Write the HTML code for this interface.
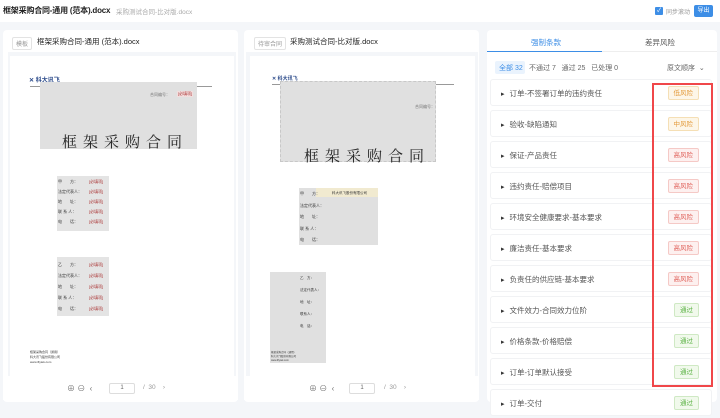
<!DOCTYPE html>
<html><head><meta charset="utf-8"><style>
*{margin:0;padding:0;box-sizing:border-box}
body{width:720px;height:402px;overflow:hidden;background:#f4f6f9;font-family:"Liberation Sans","Noto Sans CJK SC",sans-serif;position:relative;color:#333}
.a{position:absolute}
.cj{font-family:"Noto Serif CJK SC",serif}
.tag{font-size:6px;color:#999;border:1px solid #e3e3e3;border-radius:2px;padding:1px 3px}
.row{position:absolute;left:490px;width:222px;height:27px;background:#fff;border:1px solid #f1f2f4;border-radius:3px;font-size:7.5px;color:#555;line-height:27px;padding-left:10px}
.row:before{content:"▸";font-size:7px;color:#333;margin-right:5px}
.bd{position:absolute;right:12px;top:6px;height:14px;line-height:13px;font-size:6.5px;padding:0 5px;border-radius:2px;border:1px solid}
.hi{color:#e0625b;background:#fdf0ef;border-color:#f5c9c6}
.md{color:#e39a3a;background:#fdf6e8;border-color:#f5dfb5}
.ok{color:#5cb345;background:#f1f9ec;border-color:#cfe9c4}
.ft{font-size:4px;color:#333;line-height:10px}
.fv{font-size:4px;color:#a33;background:#f2dede;padding:0 1px}
</style></head><body>
<div class="a" style="left:0;top:0;width:720px;height:22px;background:#fff"></div>
<div class="a" style="left:3px;top:5px;font-size:8px;font-weight:bold;color:#222;letter-spacing:-0.2px">框架采购合同-通用 (范本).docx</div>
<div class="a" style="left:116px;top:6px;font-size:6.5px;color:#aaa">采购测试合同-比对版.docx</div>
<div class="a" style="left:655px;top:7px;width:8px;height:8px;background:#3d8ee6;border-radius:1px;color:#fff;font-size:6px;line-height:8px;text-align:center">✓</div>
<div class="a" style="left:666px;top:7px;font-size:6px;color:#999">同步滚动</div>
<div class="a" style="left:694px;top:5px;width:19px;height:12px;background:#3d8ee6;border-radius:2px;color:#fff;font-size:6px;line-height:12px;text-align:center">导出</div>

<!-- left panel -->
<div class="a" style="left:3px;top:30px;width:235px;height:372px;background:#fff;border-radius:4px"></div>
<div class="a tag" style="left:12px;top:37px">模板</div>
<div class="a" style="left:37px;top:36px;font-size:7.5px;color:#222">框架采购合同-通用 (范本).docx</div>
<div class="a" style="left:8px;top:52px;width:228px;height:324px;background:#f4f6f9"></div>
<div class="a" style="left:10px;top:56px;width:224px;height:320px;background:#fff"></div>
<div class="a" style="left:29px;top:75px;font-size:6px;color:#2b4a8a;font-weight:bold">✕ 科大讯飞</div>
<div class="a" style="left:30px;top:86px;width:182px;height:1px;background:#999"></div>
<div class="a" style="left:40px;top:82px;width:157px;height:67px;background:#e0e0e0"></div>
<div class="a" style="left:150px;top:92px;font-size:4px;color:#777">合同编号：</div>
<div class="a fv" style="left:177px;top:91px">[必填项]</div>
<div class="a cj" style="left:62px;top:131px;font-size:15px;letter-spacing:6px;color:#222">框架采购合同</div>
<div class="a" style="left:57px;top:176px;width:52px;height:55px;background:#e4e4e4"></div>
<div class="a ft" style="left:58px;top:177px">甲　　方：<br>法定代表人：<br>地　　址：<br>联 系 人：<br>电　　话：</div>
<div class="a ft" style="left:89px;top:177px;color:#a33">[必填项]<br>[必填项]<br>[必填项]<br>[必填项]<br>[必填项]</div>
<div class="a" style="left:57px;top:257px;width:52px;height:59px;background:#e4e4e4"></div>
<div class="a ft" style="left:58px;top:259px;line-height:11px">乙　　方：<br>法定代表人：<br>地　　址：<br>联 系 人：<br>电　　话：</div>
<div class="a ft" style="left:89px;top:259px;color:#a33;line-height:11px">[必填项]<br>[必填项]<br>[必填项]<br>[必填项]<br>[必填项]</div>
<div class="a" style="left:30px;top:350px;font-size:3px;line-height:5px;color:#333">框架采购合同（通用）<br>科大讯飞股份有限公司<br>www.iflytek.com</div>
<div class="a" style="left:3px;top:378px;width:235px;height:22px;background:#fff"></div>
<div class="a" style="left:67px;top:383px;font-size:8px;color:#777">⊕ ⊖ &nbsp;‹</div>
<div class="a" style="left:109px;top:383px;width:26px;height:11px;border:1px solid #ddd;border-radius:2px;font-size:6px;text-align:center;line-height:9px;color:#666">1</div>
<div class="a" style="left:143px;top:384px;font-size:6.5px;color:#999">/ &nbsp;30 &nbsp;&nbsp;&nbsp;›</div>

<!-- middle panel -->
<div class="a" style="left:244px;top:30px;width:235px;height:372px;background:#fff;border-radius:4px"></div>
<div class="a tag" style="left:254px;top:37px">待审合同</div>
<div class="a" style="left:290px;top:36px;font-size:7.5px;color:#222">采购测试合同-比对版.docx</div>
<div class="a" style="left:246px;top:52px;width:232px;height:324px;background:#f4f6f9"></div>
<div class="a" style="left:250px;top:56px;width:225px;height:320px;background:#fff"></div>
<div class="a" style="left:272px;top:75px;font-size:5px;color:#2b4a8a;font-weight:bold">✕ 科大讯飞</div>
<div class="a" style="left:272px;top:84px;width:182px;height:1px;background:#999"></div>
<div class="a" style="left:280px;top:81px;width:156px;height:81px;background:#e0e0e0;border:1px dashed #c8c8c8"></div>
<div class="a" style="left:415px;top:104px;font-size:4px;color:#777">合同编号：</div>
<div class="a cj" style="left:304px;top:145px;font-size:15px;letter-spacing:6px;color:#222">框架采购合同</div>
<div class="a" style="left:299px;top:188px;width:79px;height:57px;background:#e0e0e0"></div>
<div class="a" style="left:316px;top:188px;width:62px;height:9px;background:#f1ead0"></div>
<div class="a ft" style="left:300px;top:188px;line-height:11.5px">甲　　方：<br>法定代表人：<br>地　　址：<br>联 系 人：<br>电　　话：</div>
<div class="a ft" style="left:332px;top:188px;font-size:3.5px">科大讯飞股份有限公司</div>
<div class="a" style="left:270px;top:272px;width:56px;height:91px;background:#e0e0e0"></div>
<div class="a ft" style="left:300px;top:272px;line-height:12px;font-size:3.5px">乙　方：<br>法定代表人：<br>地　址：<br>联系人：<br>电　话：</div>
<div class="a" style="left:271px;top:351px;font-size:2.5px;line-height:4px;color:#333">框架采购合同（通用）<br>科大讯飞股份有限公司<br>www.iflytek.com</div>
<div class="a" style="left:244px;top:378px;width:235px;height:22px;background:#fff"></div>
<div class="a" style="left:309px;top:383px;font-size:8px;color:#777">⊕ ⊖ &nbsp;‹</div>
<div class="a" style="left:349px;top:383px;width:26px;height:11px;border:1px solid #ddd;border-radius:2px;font-size:6px;text-align:center;line-height:9px;color:#666">1</div>
<div class="a" style="left:384px;top:384px;font-size:6.5px;color:#999">/ &nbsp;30 &nbsp;&nbsp;&nbsp;›</div>

<!-- right panel -->
<div class="a" style="left:487px;top:30px;width:230px;height:372px;background:#fff;border-radius:4px"></div>
<div class="a" style="left:531px;top:37px;font-size:7.5px;color:#3d8ee6">强制条款</div>
<div class="a" style="left:645px;top:37px;font-size:7.5px;color:#555">差异风险</div>
<div class="a" style="left:487px;top:51px;width:115px;height:1px;background:#3d8ee6"></div>
<div class="a" style="left:602px;top:51px;width:115px;height:1px;background:#eee"></div>
<div class="a" style="left:495px;top:61px;width:30px;height:13px;background:#eaf3fd;border-radius:2px"></div>
<div class="a" style="left:499px;top:63px;font-size:7px;color:#3d8ee6">全部 32</div>
<div class="a" style="left:529px;top:63px;font-size:7px;color:#666">不通过 7 &nbsp;&nbsp;通过 25 &nbsp;&nbsp;已处理 0</div>
<div class="a" style="left:667px;top:63px;font-size:7px;color:#666">原文顺序 &nbsp;⌄</div>
<div class="row" style="top:79px">订单-不签署订单的违约责任<span class="bd md">低风险</span></div>
<div class="row" style="top:110px">验收-缺陷通知<span class="bd md">中风险</span></div>
<div class="row" style="top:141px">保证-产品责任<span class="bd hi">高风险</span></div>
<div class="row" style="top:172px">违约责任-赔偿项目<span class="bd hi">高风险</span></div>
<div class="row" style="top:203px">环境安全健康要求-基本要求<span class="bd hi">高风险</span></div>
<div class="row" style="top:234px">廉洁责任-基本要求<span class="bd hi">高风险</span></div>
<div class="row" style="top:265px">负责任的供应链-基本要求<span class="bd hi">高风险</span></div>
<div class="row" style="top:296px">文件效力-合同效力位阶<span class="bd ok">通过</span></div>
<div class="row" style="top:327px">价格条款-价格赔偿<span class="bd ok">通过</span></div>
<div class="row" style="top:358px">订单-订单默认接受<span class="bd ok">通过</span></div>
<div class="row" style="top:389px">订单-交付<span class="bd ok">通过</span></div>
<div class="a" style="left:652px;top:83px;width:61px;height:304px;border:2px solid #f0474a"></div>
</body></html>
